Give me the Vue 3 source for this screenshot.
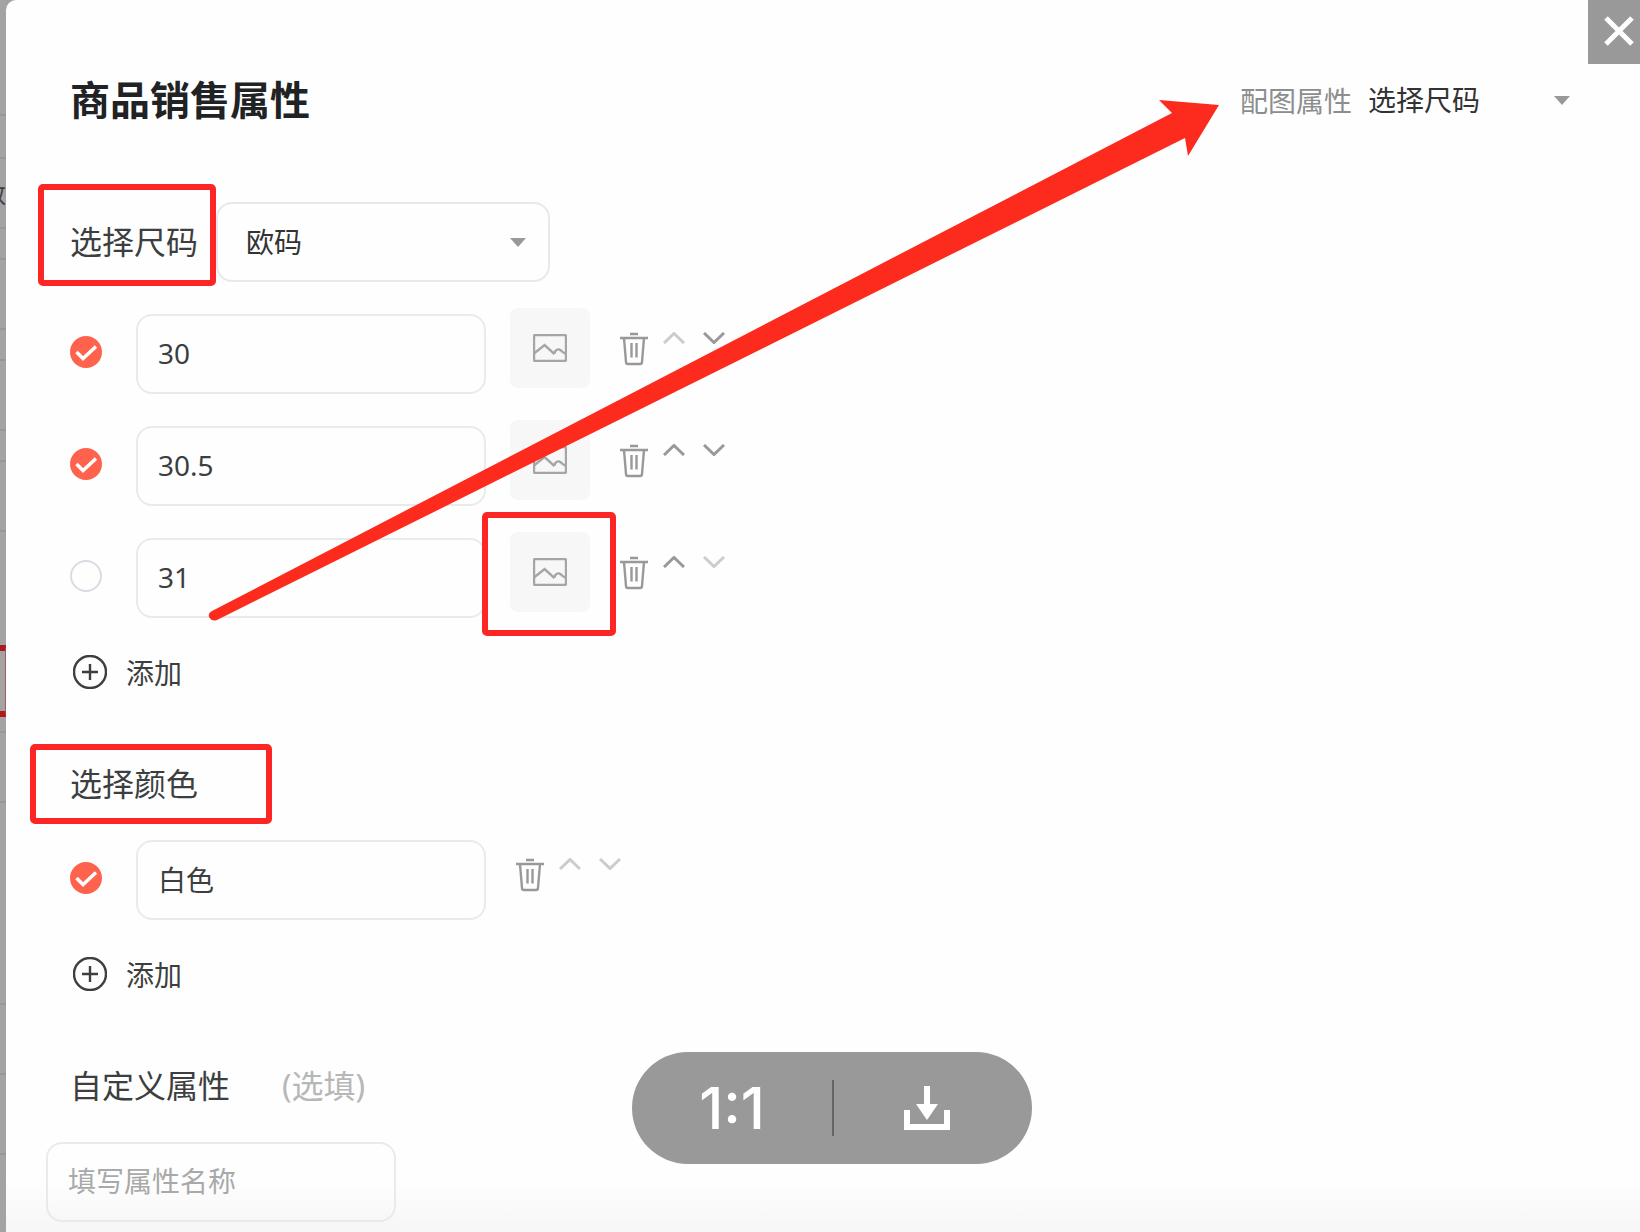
<script setup>
import { ref, reactive } from 'vue'

const imageAttr = ref('选择尺码')
const sizeType = ref('欧码')
const customName = ref('')

const sizes = reactive([
  { id: 's1', value: '30', checked: true },
  { id: 's2', value: '30.5', checked: true },
  { id: 's3', value: '31', checked: false }
])
const colors = reactive([{ id: 'c1', value: '白色', checked: true }])

const groups = [
  { key: 'size', items: sizes, hasImage: true },
  { key: 'color', items: colors, hasImage: false }
]

// 背后页面露出来的表格行高
const backRows = [116, 43, 70, 31, 70, 31, 70, 31, 70, 201, 70, 202, 70, 80]

function add(items, prefix) {
  items.push({ id: prefix + Date.now(), value: '', checked: false })
}
function move(items, i, step) {
  const [item] = items.splice(i, 1)
  items.splice(i + step, 0, item)
}
</script>

<template>
  <div class="page">
    <div class="behind" aria-hidden="true">
      <div v-for="(h, i) in backRows" :key="i" class="behind-row" :style="{ height: h + 'px' }"></div>
      <span class="behind-text">数</span>
      <span class="behind-mark"></span>
    </div>

    <main class="panel">
      <header class="head">
        <h1>商品销售属性</h1>
        <div class="image-attr">
          <label for="imageAttr">配图属性</label>
          <div class="select plain">
            <select id="imageAttr" v-model="imageAttr">
              <option>选择尺码</option>
              <option>选择颜色</option>
            </select>
            <svg class="caret" viewBox="0 0 16 9"><path d="M0 0h16l-8 9z" /></svg>
          </div>
        </div>
      </header>

      <section v-for="g in groups" :key="g.key" class="group" :class="g.key">
        <div v-if="g.key === 'size'" class="group-head">
          <label class="name" for="sizeType">选择尺码<span class="mark mark-size"></span></label>
          <div class="select boxed">
            <select id="sizeType" v-model="sizeType">
              <option>欧码</option>
              <option>美码</option>
            </select>
            <svg class="caret" viewBox="0 0 16 9"><path d="M0 0h16l-8 9z" /></svg>
          </div>
        </div>
        <div v-else class="group-head">
          <h2 class="name">选择颜色<span class="mark mark-color"></span></h2>
        </div>

        <div v-for="(item, i) in g.items" :key="item.id" class="row">
          <label class="tick">
            <input v-model="item.checked" type="checkbox" :aria-label="'启用 ' + item.value">
            <svg v-if="item.checked" viewBox="0 0 32 32"><path d="M6.500 16l6.500 6.500L26 10.500" /></svg>
          </label>
          <input v-model="item.value" class="field" type="text" aria-label="属性值">
          <div class="tools">
            <button v-if="g.hasImage" class="picture" type="button" aria-label="图片">
              <svg viewBox="0 0 34 28">
                <rect x="1" y="1" width="32" height="26" rx="1.5" />
                <path d="M1 19.5L11.500 11 21.500 20" />
                <path d="M21.500 19.500C22 16 25 14 28 16.500C29.500 18 31 19.500 33 19.500" />
              </svg>
              <span v-if="i === 2" class="mark mark-picture"></span>
            </button>
            <button class="icon trash" type="button" aria-label="删除" @click="g.items.splice(i, 1)">
              <svg viewBox="0 0 28 34">
                <path d="M10 2h8M0 6h28" />
                <path d="M4 6l2 24q0 2 2 2h12q2 0 2-2l2-24" />
                <path d="M11.500 11v14.500M16.500 11v14.500" />
              </svg>
            </button>
            <button class="icon arrow" type="button" aria-label="上移" :disabled="i === 0" @click="move(g.items, i, -1)">
              <svg viewBox="0 0 22 12"><path d="M1 11L11 1.500 21 11" /></svg>
            </button>
            <button class="icon arrow" type="button" aria-label="下移" :disabled="i === g.items.length - 1" @click="move(g.items, i, 1)">
              <svg viewBox="0 0 22 12"><path d="M1 1l10 9.500L21 1" /></svg>
            </button>
          </div>
        </div>

        <button class="add" type="button" @click="add(g.items, g.key)">
          <svg viewBox="0 0 34 34">
            <circle cx="17" cy="17" r="16" />
            <path d="M17 9v16M9 17h16" />
          </svg>
          添加
        </button>
      </section>

      <section class="custom">
        <div class="custom-head">
          <label class="name" for="customName">自定义属性</label>
          <span class="optional">(选填)</span>
        </div>
        <input id="customName" v-model="customName" class="field" type="text" placeholder="填写属性名称">
      </section>
    </main>

    <!-- 标注箭头 -->
    <svg class="pointer" width="1020" height="530" viewBox="204 96 1020 530" aria-hidden="true">
      <path d="M212 611L1172 113 1159 100 1219 105 1188 156 1185 138 217 620Q212 622 209 617Q208 613 212 611z" />
    </svg>

    <!-- 图片查看器控件 -->
    <button class="close" type="button" aria-label="关闭">
      <svg viewBox="0 0 32 32"><path d="M3 3l26 26M29 3L3 29" /></svg>
    </button>
    <div class="viewer-bar">
      <button type="button">1:1</button>
      <button type="button" aria-label="下载">
        <svg viewBox="0 0 46 44">
          <path d="M20 0h6v18h8L23 34 12 18h8z" />
          <path d="M0 24h6v14h34V24h6v20H0z" />
        </svg>
      </button>
    </div>
  </div>
</template>

<style>
body {
  margin: 0;
  background: #a0a0a0;
}
</style>

<style scoped>
* {
  box-sizing: border-box;
}
.page {
  position: relative;
  display: grid;
  grid-template-columns: 6px 1fr;
  min-height: 100vh;
  overflow: hidden;
  font-family: "Noto Sans", "Noto Sans CJK SC", sans-serif;
  font-size: 28px;
  color: #3c3e40;
}
button, input, select {
  font: inherit;
  color: inherit;
  margin: 0;
  padding: 0;
  border: 0;
  background: none;
}
svg {
  display: block;
}

/* 背后的页面 */
.behind {
  position: relative;
  overflow: hidden;
  background: #a3a3a3;
}
.behind-row {
  border-bottom: 2px solid #959898;
}
.behind-text {
  position: absolute;
  top: 180px;
  right: 0;
  font-size: 24px;
  line-height: 28px;
}
.behind-mark {
  position: absolute;
  top: 645px;
  right: 0;
  width: 40px;
  height: 72px;
  border: 6px solid #ac1a1c;
  border-right: 1px solid #a95a5b;
}

.panel {
  padding: 71px 70px 10px 64px;
  background: linear-gradient(to top, #f6f6f6, #fefefe 52px);
  border-top-left-radius: 10px;
}
.head {
  display: flex;
  justify-content: space-between;
  align-items: center;
  height: 58px;
}
h1 {
  margin: 0;
  font-size: 40px;
  line-height: 58px;
  font-weight: 700;
  color: #202224;
}
.image-attr {
  display: flex;
  align-items: center;
  gap: 16px;
  color: #8c8e8e;
}

.select {
  display: grid;
  align-items: center;
}
.select > * {
  grid-area: 1 / 1;
}
.select select {
  appearance: none;
  width: 100%;
  height: 100%;
  color: #333;
}
.caret {
  width: 16px;
  height: 9px;
  justify-self: end;
  fill: #999;
  pointer-events: none;
}
.plain {
  width: 202px;
  height: 40px;
}
.boxed {
  width: 334px;
  height: 80px;
}
.boxed select {
  padding-left: 28px;
  border: 2px solid #e6eaea;
  border-radius: 16px;
}
.boxed .caret {
  margin-right: 24px;
}

.group-head {
  display: flex;
  align-items: center;
  gap: 18px;
  height: 80px;
}
.size .group-head {
  margin-top: 73px;
  margin-bottom: 32px;
}
.color .group-head {
  margin-top: 52px;
  margin-bottom: 16px;
}
.name {
  position: relative;
  margin: 0;
  font-size: 32px;
  line-height: 48px;
  font-weight: 400;
}

/* 红色标注框 */
.mark {
  position: absolute;
  border: 6px solid #fe2624;
  border-radius: 5px;
  pointer-events: none;
}
.mark-size {
  top: -34px;
  left: -32px;
  width: 178px;
  height: 102px;
}
.mark-color {
  top: -16px;
  left: -40px;
  width: 242px;
  height: 80px;
}
.mark-picture {
  top: -20px;
  left: -28px;
  width: 134px;
  height: 124px;
}

.row {
  display: flex;
  align-items: flex-start;
  height: 80px;
}
.row + .row {
  margin-top: 32px;
}
.tick {
  display: grid;
  width: 32px;
  height: 32px;
  margin-top: 22px;
  margin-right: 34px;
}
.tick > * {
  grid-area: 1 / 1;
}
.tick input {
  appearance: none;
  width: 32px;
  height: 32px;
  border: 2px solid #d9dce2;
  border-radius: 50%;
}
.tick input:checked {
  border-color: #ff624d;
  background: #ff624d;
}
.tick svg {
  fill: none;
  stroke: #fff;
  stroke-width: 3.5;
  pointer-events: none;
}
.field {
  width: 350px;
  height: 80px;
  padding: 0 20px 2px;
  border: 2px solid #e9eaea;
  border-radius: 16px;
}
.field::placeholder {
  color: #a8a9a9;
  opacity: 1;
}

.tools {
  display: flex;
  align-items: flex-start;
}
.picture {
  position: relative;
  display: grid;
  place-items: center;
  width: 80px;
  height: 80px;
  margin-top: -6px;
  margin-left: 24px;
  border-radius: 8px;
  background: #f7f7f7;
}
.picture svg {
  width: 34px;
  height: 28px;
}
.picture svg, .icon svg {
  fill: none;
  stroke: #999;
  stroke-width: 2.4;
}
.picture svg {
  stroke: #a5a5a5;
}
.icon {
  margin-top: 18px;
}
.trash {
  margin-left: 30px;
  margin-right: 15px;
}
.trash svg {
  width: 28px;
  height: 34px;
}
.arrow + .arrow {
  margin-left: 18px;
}
.arrow svg {
  width: 22px;
  height: 12px;
  stroke-width: 3;
}
.arrow:disabled svg {
  stroke: #ccc;
}

.add {
  display: flex;
  align-items: center;
  gap: 19px;
  height: 40px;
  margin-top: 34px;
  margin-left: 3px;
}
.add svg {
  width: 34px;
  height: 34px;
  fill: none;
  stroke: #3c3e40;
  stroke-width: 2.4;
}

.custom {
  margin-top: 68px;
}
.custom-head {
  display: flex;
  align-items: center;
  gap: 52px;
  height: 48px;
}
.optional {
  font-size: 32px;
  line-height: 48px;
  color: #b6b7b7;
}
.custom .field {
  display: block;
  margin-top: 32px;
  margin-left: -24px;
}

.pointer {
  position: absolute;
  top: 96px;
  left: 204px;
  fill: #fc2b1d;
  pointer-events: none;
}

.close {
  position: absolute;
  top: 0;
  right: 0;
  width: 52px;
  height: 64px;
  padding: 15px 5px 17px 15px;
  background: #999;
}
.close svg {
  width: 32px;
  height: 32px;
  fill: none;
  stroke: #fff;
  stroke-width: 5;
}
.viewer-bar {
  position: absolute;
  bottom: 68px;
  left: calc(50% - 188px);
  display: flex;
  align-items: center;
  width: 400px;
  height: 112px;
  border-radius: 56px;
  background: #999;
}
.viewer-bar button {
  display: grid;
  place-items: center;
  flex: 0 0 200px;
  height: 56px;
  font-family: Inter, sans-serif;
  font-size: 58px;
  line-height: 56px;
  font-weight: 500;
  color: #fff;
}
.viewer-bar button + button {
  padding-right: 12px;
  border-left: 2px solid #666;
}
.viewer-bar svg {
  width: 46px;
  height: 44px;
  fill: #fff;
}
</style>
